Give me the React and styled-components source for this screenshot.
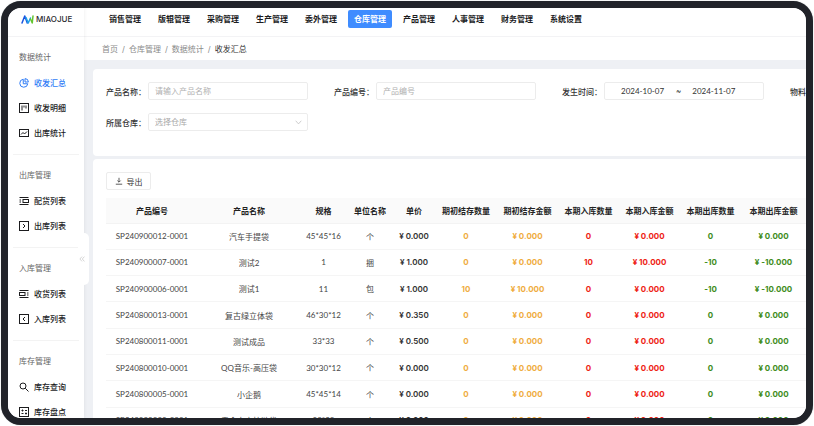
import React from "react";
import styled, { createGlobalStyle, css } from "styled-components";

const Global = createGlobalStyle`
  *, *::before, *::after { box-sizing: border-box; }
  body { margin: 0; background: #fff; }
  body, button, input, select {
    font-family: Inter, "Noto Sans CJK SC", sans-serif;
    font-size: 8px;
    color: #333;
  }
  a { color: inherit; text-decoration: none; }
`;

const numeric = css`
  font-family: Lato, "Noto Sans CJK SC", sans-serif;
`;

const Device = styled.div`
  height: 100vh;
  padding: 1px;
  overflow: hidden;
`;
const Screen = styled.div`
  display: flex;
  height: 100%;
  border: 7px solid #212329;
  border-radius: 20px;
  box-shadow: 0 0 1px #99a1a1;
  overflow: hidden;
  background: #eef0f4;
`;

const Sidebar = styled.aside`
  position: relative;
  flex: none;
  width: 76px;
  background: #fff;
  box-shadow: 1px 0 3px rgba(0, 0, 0, 0.05);
`;
const Brand = styled.a`
  display: flex;
  align-items: center;
  gap: 2px;
  height: 29px;
  padding: 0 0 6px 13px;
  border-bottom: 1px solid #f3f3f5;
  font-size: 8px;
  line-height: 10px;
  font-weight: 500;
  color: #2b2b2f;
`;
const Group = styled.section`
  margin: 0 5px;
  padding: 13px 0 9px 6px;
  border-bottom: 1px solid #f3f3f3;
  &:last-of-type { border: 0; }
`;
const GroupTitle = styled.h2`
  margin: 0 0 6px;
  font-size: 8px;
  line-height: 14px;
  font-weight: 400;
  color: #666;
`;
const SideLink = styled.a`
  display: flex;
  align-items: center;
  gap: 5px;
  height: 25px;
  font-size: 8px;
  font-weight: 500;
  white-space: nowrap;
  color: ${(p) => (p.$active ? "#2f7cf6" : "#1c1c1e")};
`;
const Collapse = styled.button`
  position: absolute;
  z-index: 1;
  left: 70px;
  top: 225px;
  display: flex;
  align-items: center;
  width: 11px;
  height: 52px;
  padding: 0 0 0 1px;
  border: 0;
  border-radius: 0 5px 5px 0;
  background: #fff;
  color: #bbb;
`;

const Main = styled.main`
  flex: 1;
  min-width: 0;
  display: flex;
  flex-direction: column;
`;
const TopNav = styled.nav`
  flex: none;
  display: flex;
  align-items: flex-start;
  height: 29px;
  padding: 2px 0 0 19px;
  gap: 5px;
  background: #fff;
  border-bottom: 1px solid #f3f3f5;
`;
const TopLink = styled.a`
  flex: none;
  width: 44px;
  height: 18px;
  line-height: 18px;
  border-radius: 2px;
  text-align: center;
  font-size: 8px;
  font-weight: 700;
  white-space: nowrap;
  color: ${(p) => (p.$active ? "#fff" : "#1c1c1e")};
  background: ${(p) => (p.$active ? "#3f8cff" : "transparent")};
`;
const Crumbs = styled.nav`
  flex: none;
  display: flex;
  align-items: center;
  gap: 4px;
  height: 23px;
  padding-left: 18px;
  background: #fff;
  color: #8a8a8a;
`;
const Current = styled.span`
  color: #333;
`;
const Card = styled.section`
  flex: none;
  margin: ${(p) => (p.$first ? "9px" : "3px")} 0 0 9px;
  padding: 13px 0 0 13px;
  border-radius: 4px 0 0 4px;
  background: #fff;
  overflow: hidden;
`;
const Filters = styled.form`
  display: grid;
  grid-template-columns: repeat(4, 228px);
  row-gap: 13px;
  padding-bottom: 25px;
`;
const Field = styled.div`
  display: flex;
  align-items: center;
`;
const Label = styled.label`
  flex: none;
  width: 42px;
  font-weight: 500;
  white-space: nowrap;
`;
const control = css`
  width: 160px;
  height: 18px;
  border: 1px solid #ececec;
  border-radius: 2px;
  background: #fff;
`;
const TextBox = styled.input`
  ${control}
  padding: 0 6px;
  &::placeholder { color: #b0b0b0; opacity: 1; }
`;
const SelectWrap = styled.div`
  display: grid;
  align-items: center;
  color: #b8b8b8;
  svg { grid-area: 1 / 1; justify-self: end; margin-right: 6px; pointer-events: none; }
`;
const Select = styled.select`
  ${control}
  grid-area: 1 / 1;
  appearance: none;
  padding: 0 6px;
  color: #a8a8a8;
`;
const DateRange = styled.div`
  ${control}
  display: flex;
  align-items: center;
  padding-left: 16px;
  gap: 11px;
`;
const DateBox = styled.input`
  ${numeric}
  width: 44px;
  padding: 0;
  border: 0;
  background: transparent;
`;
const ExportButton = styled.button`
  display: flex;
  align-items: center;
  justify-content: center;
  gap: 4px;
  width: 45px;
  height: 18px;
  margin: 0 0 8px;
  padding: 0;
  border: 1px solid #ececec;
  border-radius: 2px;
  background: #fff;
  white-space: nowrap;
`;
const Table = styled.table`
  width: 100%;
  min-width: 700px;
  height: 236px;
  table-layout: fixed;
  border-collapse: collapse;
`;
const Th = styled.th`
  height: 25px;
  padding: 0;
  background: #fafafa;
  border-bottom: 1px solid #f3f3f3;
  font-weight: 600;
  white-space: nowrap;
  color: #222;
`;
const tones = { price: "#333", orange: "#efad3f", red: "#ee2314", green: "#3e8c1b" };
const Td = styled.td`
  padding: 0;
  border-bottom: 1px solid #f5f5f5;
  text-align: center;
  white-space: nowrap;
  font-weight: ${(p) => (p.$tone ? (p.$tone === "price" ? 600 : 700) : 400)};
  color: ${(p) => tones[p.$tone] || "#444"};
  ${(p) => !p.$tone && numeric}
`;

const Svg = ({ children, size = 10, stroke = 2 }) => (
  <svg width={size} height={size} viewBox="0 0 20 20" fill="none" stroke="currentColor" strokeWidth={stroke} aria-hidden="true">
    {children}
  </svg>
);
const box = <rect x="1" y="1" width="18" height="18" />;
const icons = {
  pie: <><path d="M8.5 2.5A8 8 0 1 0 17.5 11.5H8.5z" /><path d="M12 1.2V8h6.8A7 7 0 0 0 12 1.2z" /></>,
  bars: <>{box}<path d="M6 5v10M10 5v4M14 5v6" /></>,
  trend: <><rect x="1" y="3" width="18" height="14" /><path d="M4 13l4-4 3 3 5-5" /></>,
  pick: <><path d="M1 3h18M1 17h18M1 8h3M1 12h3" /><rect x="8" y="7" width="11" height="6" /></>,
  receive: <><path d="M1 3h18M1 17h18M16 8h3M16 12h3" /><rect x="1" y="7" width="11" height="6" /></>,
  out: <>{box}<path d="M8 6l4 4-4 4" /></>,
  into: <>{box}<path d="M12 6l-4 4 4 4" /></>,
  search: <><circle cx="8" cy="8" r="6" /><path d="M12.5 12.5L19 19" /></>,
  count: <>{box}<path d="M5 7h4M7 5v4M12 7h4M5 13h4M12 13h4M14 11v4" /></>,
};

const groups = [
  ["数据统计", [["收发汇总", "pie", true], ["收发明细", "bars"], ["出库统计", "trend"]]],
  ["出库管理", [["配货列表", "pick"], ["出库列表", "out"]]],
  ["入库管理", [["收货列表", "receive"], ["入库列表", "into"]]],
  ["库存管理", [["库存查询", "search"], ["库存盘点", "count"]]],
];
const menu = ["销售管理", "版辊管理", "采购管理", "生产管理", "委外管理", "仓库管理", "产品管理", "人事管理", "财务管理", "系统设置"];
const columns = [
  ["产品编号", 92], ["产品名称", 102], ["规格", 47], ["单位名称", 46], ["单价", 42],
  ["期初结存数量", 62], ["期初结存金额", 61], ["本期入库数量", 61], ["本期入库金额", 61], ["本期出库数量", 61], ["本期出库金额", 65],
];
const columnTones = [null, null, null, null, "price", "orange", "orange", "red", "red", "green", "green"];
const zero = "¥ 0.000";
const rows = [
  ["SP240900012-0001", "汽车手提袋", "45*45*16", "个", zero, "0", zero, "0", zero, "0", zero],
  ["SP240900007-0001", "测试2", "1", "捆", "¥ 1.000", "0", zero, "10", "¥ 10.000", "-10", "¥ -10.000"],
  ["SP240900006-0001", "测试1", "11", "包", "¥ 1.000", "10", "¥ 10.000", "0", zero, "-10", "¥ -10.000"],
  ["SP240800013-0001", "复古绿立体袋", "46*30*12", "个", "¥ 0.350", "0", zero, "0", zero, "0", zero],
  ["SP240800011-0001", "测试成品", "33*33", "个", "¥ 0.500", "0", zero, "0", zero, "0", zero],
  ["SP240800010-0001", "QQ音乐-高压袋", "30*30*12", "个", zero, "0", zero, "0", zero, "0", zero],
  ["SP240800005-0001", "小企鹅", "45*45*14", "个", zero, "0", zero, "0", zero, "0", zero],
  ["SP240800003-0001", "零食自立拉链袋", "30*20", "个", zero, "0", zero, "0", zero, "0", zero],
];

const Mark = () => (
  <svg width="13" height="9" viewBox="0 0 26 18" fill="none" strokeLinecap="round" strokeLinejoin="round" strokeWidth="3" aria-hidden="true">
    <path d="M2 16L7.500 2l5 14" stroke="#1a55e0" />
    <path d="M10 5l4.500 11L19 6" stroke="#22a2e8" />
    <path d="M24 2l-1.500 14L19 8" stroke="#63c52f" />
  </svg>
);

export default function App() {
  return (
    <Device>
      <Global />
      <Screen>
        <Sidebar>
          <Brand href="#"><Mark />MIAOJUE</Brand>
          {groups.map(([title, links]) => (
            <Group key={title}>
              <GroupTitle>{title}</GroupTitle>
              {links.map(([name, icon, active]) => (
                <SideLink key={name} href="#" $active={active}><Svg>{icons[icon]}</Svg>{name}</SideLink>
              ))}
            </Group>
          ))}
          <Collapse aria-label="收起">
            <Svg size={6}><path d="M10 2L3 10l7 8M18 2l-7 8 7 8" /></Svg>
          </Collapse>
        </Sidebar>
        <Main>
          <TopNav>{menu.map((m) => <TopLink key={m} href="#" $active={m === "仓库管理"}>{m}</TopLink>)}</TopNav>
          <Crumbs>
            <a href="#">首页</a><span>/</span><a href="#">仓库管理</a><span>/</span><a href="#">数据统计</a><span>/</span><Current>收发汇总</Current>
          </Crumbs>
          <Card $first>
            <Filters>
              <Field><Label htmlFor="name">产品名称：</Label><TextBox id="name" placeholder="请输入产品名称" /></Field>
              <Field><Label htmlFor="code">产品编号：</Label><TextBox id="code" placeholder="产品编号" /></Field>
              <Field>
                <Label htmlFor="from">发生时间：</Label>
                <DateRange>
                  <DateBox id="from" defaultValue="2024-10-07" /><span>~</span><DateBox aria-label="结束时间" defaultValue="2024-11-07" />
                </DateRange>
              </Field>
              <Field><Label htmlFor="kind">物料分类：</Label><TextBox id="kind" /></Field>
              <Field>
                <Label htmlFor="store">所属仓库：</Label>
                <SelectWrap>
                  <Select id="store"><option>选择仓库</option></Select>
                  <Svg size={7}><path d="M2 5l8 9 8-9" /></Svg>
                </SelectWrap>
              </Field>
            </Filters>
          </Card>
          <Card>
            <ExportButton><Svg size={8}><path d="M10 2v10M6 9l4 4 4-4M2 18h16" /></Svg>导出</ExportButton>
            <Table>
              <colgroup>{columns.map(([n, w]) => <col key={n} width={w} />)}</colgroup>
              <thead><tr>{columns.map(([n]) => <Th key={n}>{n}</Th>)}</tr></thead>
              <tbody>
                {rows.map((r) => <tr key={r[0]}>{r.map((c, i) => <Td key={i} $tone={columnTones[i]}>{c}</Td>)}</tr>)}
              </tbody>
            </Table>
          </Card>
        </Main>
      </Screen>
    </Device>
  );
}
